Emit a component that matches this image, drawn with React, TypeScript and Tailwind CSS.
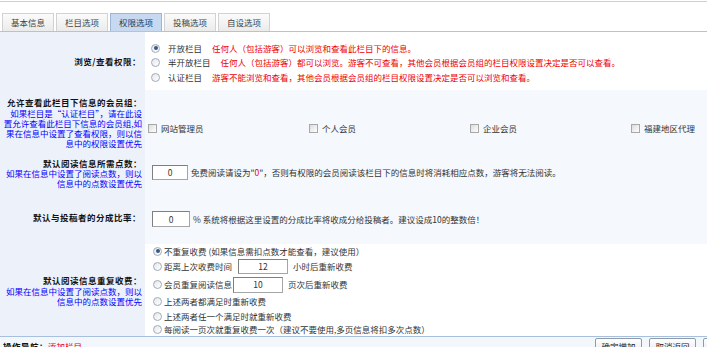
export default function App() {
  const tabs = ["基本信息", "栏目选项", "权限选项", "投稿选项", "自设选项"];
  const groups = ["网站管理员", "个人会员", "企业会员", "福建地区代理"];

  const Radio = ({ checked = false }: { checked?: boolean }) => (
    <span className="inline-flex w-[9px] h-[9px] shrink-0 items-center justify-center rounded-full border border-[#a3abb6] bg-gradient-to-br from-[#e4e7eb] to-white">
      {checked && <span className="w-[4px] h-[4px] rounded-full bg-[#34598a]"></span>}
    </span>
  );

  const Box = () => (
    <span className="inline-block w-[9px] h-[9px] shrink-0 border border-[#a8a8a8] bg-gradient-to-br from-[#dcdcdc] to-white"></span>
  );

  const Field = ({ value, w, h }: { value: string; w: string; h: string }) => (
    <span className={`inline-flex ${w} ${h} shrink-0 items-center justify-center border border-[#a5a5a5] border-t-[#7f7f7f] border-l-[#7f7f7f] bg-white text-[#333]`}>
      {value}
    </span>
  );

  return (
    <div className="w-[707px] h-[347px] overflow-hidden bg-white font-['Noto_Sans_CJK_SC',sans-serif] text-[8.5px] text-[#333]">
      <div className="w-[800px]">
        {/* top line + tabs */}
        <div className="mt-[1px] border-t border-[#c8d2de]"></div>
        <div className="flex gap-[2px] pl-[2px] pt-[11px] border-b border-[#b4c4d8]">
          {tabs.map((t, i) => (
            <div
              key={t}
              className={
                i === 2
                  ? "w-[52px] h-[18px] flex items-center justify-center border border-b-0 border-[#9fb5d3] bg-[#c7d9f0] text-[#2c3b52]"
                  : "w-[52px] h-[18px] flex items-center justify-center border border-b-0 border-[#d2d2d2] bg-gradient-to-b from-[#fbfbfb] to-[#ebebeb] text-[#444]"
              }
            >
              {t}
            </div>
          ))}
        </div>

        {/* 浏览/查看权限 */}
        <div className="flex h-[58px]">
          <div className="w-[145px] shrink-0 bg-[#edf2fa] flex items-center justify-end pr-[4px]">
            <span className="font-bold tracking-[0.5px] text-[#111]">浏览/查看权限：</span>
          </div>
          <div className="flex-1 flex flex-col justify-center pl-[6px] pt-[3px] bg-white whitespace-nowrap">
            <div className="h-[14.5px] flex items-center">
              <Radio checked />
              <span className="ml-[8px]">开放栏目</span>
              <span className="ml-[10px] text-[#ee0000]">任何人（包括游客）可以浏览和查看此栏目下的信息。</span>
            </div>
            <div className="h-[14.5px] flex items-center">
              <Radio />
              <span className="ml-[8px]">半开放栏目</span>
              <span className="ml-[10px] text-[#ee0000]">任何人（包括游客）都可以浏览。游客不可查看，其他会员根据会员组的栏目权限设置决定是否可以查看。</span>
            </div>
            <div className="h-[14.5px] flex items-center">
              <Radio />
              <span className="ml-[8px]">认证栏目</span>
              <span className="ml-[10px] text-[#ee0000]">游客不能浏览和查看，其他会员根据会员组的栏目权限设置决定是否可以浏览和查看。</span>
            </div>
          </div>
        </div>

        {/* 会员组 */}
        <div className="flex h-[65px]">
          <div className="w-[145px] shrink-0 bg-[#edf2fa] flex flex-col justify-center items-end pr-[3px] text-right whitespace-nowrap">
            <div className="font-bold tracking-[0.5px] text-[#111] leading-[11px]">允许查看此栏目下信息的会员组：</div>
            <div className="text-[#0000ff] leading-[10px]">
              如果栏目是“认证栏目”，请在此设<br />
              置允许查看此栏目下信息的会员组,如<br />
              果在信息中设置了查看权限，则以信<br />
              息中的权限设置优先
            </div>
          </div>
          <div className="flex-1 flex items-center pl-[3px] bg-[#f5f8fc]">
            <div className="flex mt-[11px]">
              {groups.map((g) => (
                <div key={g} className="w-[161px] flex items-center">
                  <Box />
                  <span className="ml-[4px]">{g}</span>
                </div>
              ))}
            </div>
          </div>
        </div>

        {/* 所需点数 */}
        <div className="flex h-[35px]">
          <div className="w-[145px] shrink-0 bg-[#edf2fa] flex flex-col justify-center items-end pr-[3px] text-right whitespace-nowrap">
            <div className="font-bold tracking-[0.5px] text-[#111] leading-[10px]">默认阅读信息所需点数：</div>
            <div className="text-[#0000ff] leading-[10px]">
              如果在信息中设置了阅读点数，则以<br />
              信息中的点数设置优先
            </div>
          </div>
          <div className="flex-1 flex items-center pl-[7px] bg-[#f5f8fc] whitespace-nowrap">
            <Field value="0" w="w-[36px]" h="h-[15px]" />
            <span className="ml-[3px]">
              免费阅读请设为"<span className="text-[#ee0000]">0</span>"，否则有权限的会员阅读该栏目下的信息时将消耗相应点数，游客将无法阅读。
            </span>
          </div>
        </div>

        {/* 分成比率 */}
        <div className="flex h-[54px]">
          <div className="w-[145px] shrink-0 bg-[#edf2fa] flex items-center justify-end pr-[4px]">
            <span className="font-bold tracking-[0.5px] text-[#111]">默认与投稿者的分成比率：</span>
          </div>
          <div className="flex-1 flex items-center pl-[7px] pt-[4px] bg-[#f5f8fc] whitespace-nowrap">
            <Field value="0" w="w-[38px]" h="h-[16px]" />
            <span className="ml-[3px]">% 系统将根据这里设置的分成比率将收成分给投稿者。建议设成10的整数倍！</span>
          </div>
        </div>

        {/* 重复收费 */}
        <div className="flex h-[92px]">
          <div className="w-[145px] shrink-0 bg-[#edf2fa] flex flex-col justify-center items-end pr-[3px] text-right whitespace-nowrap">
            <div className="font-bold tracking-[0.5px] text-[#111] leading-[12px]">默认阅读信息重复收费：</div>
            <div className="text-[#0000ff] leading-[10px]">
              如果在信息中设置了阅读点数，则以<br />
              信息中的点数设置优先
            </div>
          </div>
          <div className="flex-1 flex flex-col pl-[8px] bg-white whitespace-nowrap">
            <div className="h-[14px] flex items-center">
              <Radio checked />
              <span className="ml-[2px]">不重复收费 (如果信息需扣点数才能查看，建议使用）</span>
            </div>
            <div className="h-[17px] flex items-center">
              <Radio />
              <span className="ml-[2px]">距离上次收费时间</span>
              <span className="ml-[6px] flex">
                <Field value="12" w="w-[50px]" h="h-[15px]" />
              </span>
              <span className="ml-[5px]">小时后重新收费</span>
            </div>
            <div className="h-[19px] flex items-center">
              <Radio />
              <span className="ml-[2px]">会员重复阅读信息</span>
              <span className="ml-[1px] flex">
                <Field value="10" w="w-[50px]" h="h-[16px]" />
              </span>
              <span className="ml-[5px]">页次后重新收费</span>
            </div>
            <div className="h-[15px] flex items-center">
              <Radio />
              <span className="ml-[2px]">上述两者都满足时重新收费</span>
            </div>
            <div className="h-[14px] flex items-center">
              <Radio />
              <span className="ml-[2px]">上述两者任一个满足时就重新收费</span>
            </div>
            <div className="h-[13px] flex items-center">
              <Radio />
              <span className="ml-[2px]">每阅读一页次就重复收费一次（建议不要使用,多页信息将扣多次点数）</span>
            </div>
          </div>
        </div>

        {/* 操作导航 */}
        <div className="flex justify-between h-[24px] border-t border-[#a6c0dd] bg-[#f3f7fc] pl-[3px] pr-[50px]">
          <div className="mt-[1px] leading-[17px] whitespace-nowrap">
            <span className="font-bold tracking-[0.5px] text-[#111]">操作导航：</span>
            <span className="text-[#ee0000]">添加栏目</span>
          </div>
          <div className="flex gap-[7px] mt-[1px]">
            {["确定增加", "取消返回", "重新填写"].map((b) => (
              <button
                key={b}
                className="w-[47px] h-[17px] flex items-center justify-center border border-[#8e9bab] rounded-[2px] bg-gradient-to-b from-white to-[#e2e6ec] text-[#222]"
              >
                {b}
              </button>
            ))}
          </div>
        </div>
      </div>
    </div>
  );
}
